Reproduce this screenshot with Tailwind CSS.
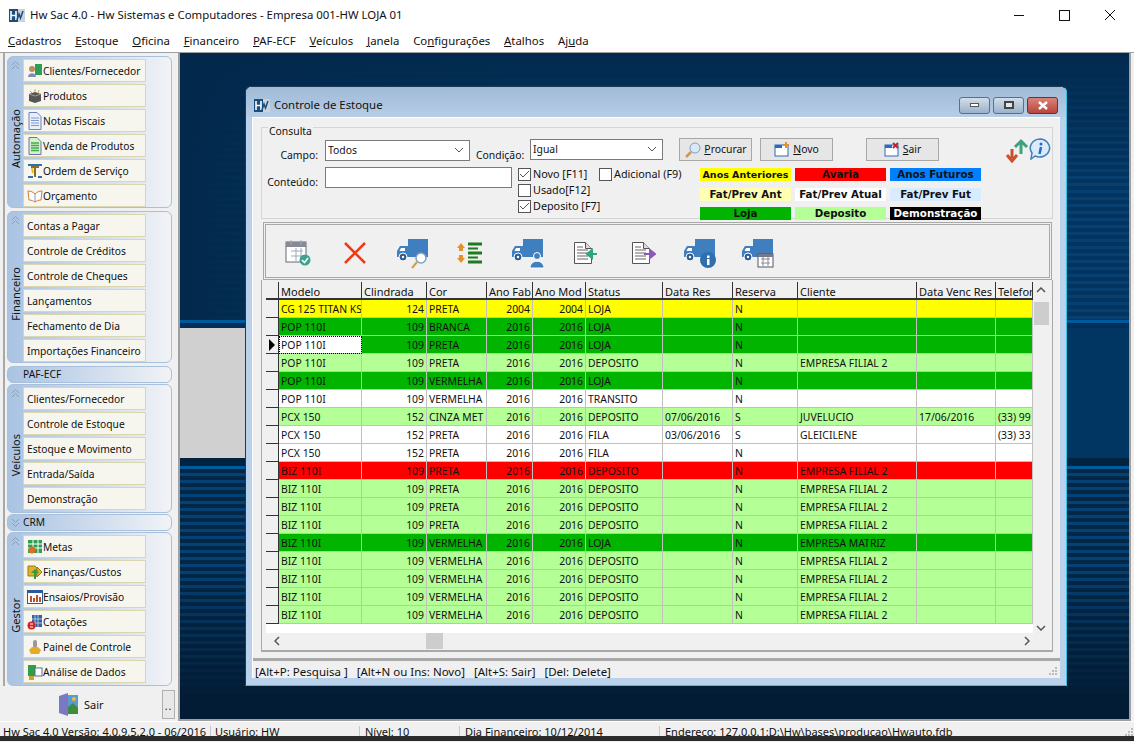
<!DOCTYPE html>
<html lang="en">
<head>
  <meta charset="UTF-8" />
  <title>Hw Sac 4.0</title>
  <script src="https://cdn.jsdelivr.net/npm/@tailwindcss/browser@4"></script>
</head>
<body class="w-[1134px] h-[742px] overflow-hidden bg-[#f0f0f0] text-[10.4px] leading-none text-[#111] font-['Noto_Sans',sans-serif]">

  <!-- shared icons -->
  <svg class="hidden">
    <symbol id="logo" viewBox="0 0 16 13">
      <rect width="16" height="13" fill="#1d4d7d"/><rect x="9" width="7" height="13" fill="#c9d3dc"/>
      <path d="M2 2v9M7 2v9M2 6.500h5" stroke="#fff" stroke-width="1.600" fill="none"/>
      <path d="M8 11l2-6 1.500 4L14 2" stroke="#1d4d7d" stroke-width="1.500" fill="none"/>
    </symbol>
    <symbol id="truck" viewBox="0 0 34 34">
      <rect x="12" y="3" width="20" height="18" fill="#3f7fbf"/>
      <path d="M1 21v-6l3-5h8v11z" fill="#3f7fbf"/><path d="M3.500 15l1.500-3h4v3z" fill="#fff"/>
      <circle cx="7" cy="21" r="4" fill="#2f5f8f" stroke="#fff"/><circle cx="7" cy="21" r="1.200" fill="#fff"/>
    </symbol>
    <symbol id="page" viewBox="0 0 24 24">
      <path d="M2.500 1.500h11l6 6v15h-17z" fill="#fff" stroke="#555"/><path d="M13.500 1.500v6h6" fill="#ddd" stroke="#555"/>
      <path d="M5 6h6M5 9h11M5 12h11M5 15h11M5 18h11" stroke="#666"/>
    </symbol>
    <symbol id="doc" viewBox="0 0 16 18">
      <path d="M2 .5h8l4 4v13H2z" fill="#e9eefb" stroke="#6f7fc0"/><path d="M4 6h8M4 8.500h8M4 11h8M4 13.500h8" stroke="#7f9bd0"/>
    </symbol>
  </svg>

  <!-- app title bar -->
  <div class="h-[30px] bg-white flex items-center pl-[9px] relative">
    <svg class="w-4 h-[13px] mr-[5px]"><use href="#logo"/></svg>
    <span class="text-[11.4px]">Hw Sac 4.0 - Hw Sistemas e Computadores - Empresa 001-HW LOJA 01</span>
    <div class="ml-auto flex items-center h-full">
      <svg class="w-[46px] h-[12px]" viewBox="0 0 46 12"><path d="M18 6.500h10" stroke="#111"/></svg>
      <svg class="w-[46px] h-[12px]" viewBox="0 0 46 12"><rect x="17.500" y="1.500" width="10" height="10" fill="none" stroke="#111"/></svg>
      <svg class="w-[46px] h-[12px]" viewBox="0 0 46 12"><path d="M17 1l10 10M27 1L17 11" stroke="#111" fill="none"/></svg>
    </div>
  </div>

  <!-- menu -->
  <nav class="h-[22px] bg-white flex items-center pl-[8px] gap-[13.800px] text-[11.4px]">
    <span><u>C</u>adastros</span><span><u>E</u>stoque</span><span><u>O</u>ficina</span><span><u>F</u>inanceiro</span><span><u>P</u>AF-ECF</span><span><u>V</u>eículos</span><span><u>J</u>anela</span><span>Co<u>n</u>figurações</span><span><u>A</u>talhos</span><span>Aj<u>u</u>da</span>
  </nav>

  <div class="flex h-[670px] border-t border-[#a0a0a0]">

    <!-- left panel -->
    <aside class="w-[178px] shrink-0 flex flex-col text-[10.25px]">
      <div class="h-[633px] shrink-0 ml-[3px] pl-[2px] pt-[3px] border-l-2 border-[#a8a8a8] flex flex-col gap-[3px]">

      <!-- Automação -->
      <section class="w-[165px] h-[152px] shrink-0 flex rounded-md border border-[#a9c0dc] bg-linear-to-r from-[#a9c3e2] to-[#f1f3f6]">
        <div class="w-[15px] flex flex-col items-center pt-[3px]">
          <svg class="w-[9px] h-[10px]" viewBox="0 0 9 10"><path d="M1 5l3.500-3.500L8 5M1 9l3.500-3.500L8 9" stroke="#8aa0b8" fill="none"/></svg>
          <div class="flex-1 flex items-center justify-center"><span class="[writing-mode:vertical-rl] rotate-180 text-[11px]">Automação</span></div>
        </div>
        <div class="flex flex-col gap-[2px] pt-[2px]">
          <div class="w-[123px] h-[23px] flex items-center pl-[3px] pt-[1px] bg-[#f6f6ee] border border-[#dad7b0]"><svg class="w-[16px] h-[16px] shrink-0" viewBox="0 0 16 16"><rect x="8" y="1" width="7" height="11" fill="#2f9e55"/><circle cx="5" cy="6" r="3" fill="#b98a60"/><path d="M1 14c0-5 8-5 8 0z" fill="#7f8fb0"/></svg>Clientes/Fornecedor</div>
          <div class="w-[123px] h-[23px] flex items-center pl-[3px] pt-[1px] bg-[#f6f6ee] border border-[#dad7b0]"><svg class="w-[16px] h-[16px] shrink-0" viewBox="0 0 16 16"><path d="M2 6l6-2 6 2v7l-6 2-6-2z" fill="#555"/><path d="M2 6l6 2 6-2" stroke="#999" fill="none"/><path d="M3 3l2 2M8 1v3M12 2l-1 3" stroke="#d9a030"/></svg>Produtos</div>
          <div class="w-[123px] h-[23px] flex items-center pl-[3px] pt-[1px] bg-[#f6f6ee] border border-[#dad7b0]"><svg class="w-[16px] h-[18px] shrink-0"><use href="#doc"/></svg>Notas Fiscais</div>
          <div class="w-[123px] h-[23px] flex items-center pl-[3px] pt-[1px] bg-[#f6f6ee] border border-[#dad7b0]"><svg class="w-[16px] h-[18px] shrink-0" viewBox="0 0 16 18"><path d="M2 .5h8l4 4v13H2z" fill="#d8f0c8" stroke="#6f70b0"/><path d="M4 6h8M4 8.500h8M4 11h8M4 13.500h8" stroke="#3caa50" stroke-width="1.500"/></svg>Venda de Produtos</div>
          <div class="w-[123px] h-[23px] flex items-center pl-[3px] pt-[1px] bg-[#f6f6ee] border border-[#dad7b0]"><svg class="w-[16px] h-[16px] shrink-0" viewBox="0 0 16 16"><path d="M1 2h14M1 14h5M11 14h4" stroke="#2f70b0" stroke-width="2"/><path d="M8 3v11M4 4h8" stroke="#8a6a30" stroke-width="2"/><path d="M5 5l1 5" stroke="#e8c020" stroke-width="2"/></svg>Ordem de Serviço</div>
          <div class="w-[123px] h-[23px] flex items-center pl-[3px] pt-[1px] bg-[#f6f6ee] border border-[#dad7b0]"><svg class="w-[16px] h-[16px] shrink-0" viewBox="0 0 16 16"><path d="M1 3c3 0 5 1 7 3 2-2 4-3 7-3l-1 9c-3 0-4 1-6 2-2-1-3-2-6-2z" fill="#fff" stroke="#d97a30"/><path d="M8 6v8" stroke="#7f9bd0"/></svg>Orçamento</div>
        </div>
      </section>

      <!-- Financeiro -->
      <section class="w-[165px] h-[152px] shrink-0 flex rounded-md border border-[#a9c0dc] bg-linear-to-r from-[#a9c3e2] to-[#f1f3f6]">
        <div class="w-[15px] flex flex-col items-center pt-[3px]">
          <svg class="w-[9px] h-[10px]" viewBox="0 0 9 10"><path d="M1 5l3.500-3.500L8 5M1 9l3.500-3.500L8 9" stroke="#8aa0b8" fill="none"/></svg>
          <div class="flex-1 flex items-center justify-center"><span class="[writing-mode:vertical-rl] rotate-180 text-[11px]">Financeiro</span></div>
        </div>
        <div class="flex flex-col gap-[2px] pt-[2px]">
          <div class="w-[123px] h-[23px] flex items-center pl-[3px] pt-[1px] bg-[#f6f6ee] border border-[#dad7b0]">Contas a Pagar</div>
          <div class="w-[123px] h-[23px] flex items-center pl-[3px] pt-[1px] bg-[#f6f6ee] border border-[#dad7b0]">Controle de Créditos</div>
          <div class="w-[123px] h-[23px] flex items-center pl-[3px] pt-[1px] bg-[#f6f6ee] border border-[#dad7b0]">Controle de Cheques</div>
          <div class="w-[123px] h-[23px] flex items-center pl-[3px] pt-[1px] bg-[#f6f6ee] border border-[#dad7b0]">Lançamentos</div>
          <div class="w-[123px] h-[23px] flex items-center pl-[3px] pt-[1px] bg-[#f6f6ee] border border-[#dad7b0]">Fechamento de Dia</div>
          <div class="w-[123px] h-[23px] flex items-center pl-[3px] pt-[1px] bg-[#f6f6ee] border border-[#dad7b0] whitespace-nowrap">Importações Financeiro</div>
        </div>
      </section>

      <!-- PAF-ECF -->
      <div class="w-[165px] h-[17px] shrink-0 flex items-center pl-[15px] rounded-md border border-[#a9c0dc] bg-linear-to-r from-[#a9c3e2] to-[#f1f3f6]">PAF-ECF</div>

      <!-- Veículos -->
      <section class="-mt-[2px] w-[165px] h-[129px] shrink-0 flex rounded-md border border-[#a9c0dc] bg-linear-to-r from-[#a9c3e2] to-[#f1f3f6]">
        <div class="w-[15px] flex flex-col items-center pt-[3px]">
          <svg class="w-[9px] h-[10px]" viewBox="0 0 9 10"><path d="M1 5l3.500-3.500L8 5M1 9l3.500-3.500L8 9" stroke="#8aa0b8" fill="none"/></svg>
          <div class="flex-1 flex items-center justify-center"><span class="[writing-mode:vertical-rl] rotate-180 text-[11px]">Veículos</span></div>
        </div>
        <div class="flex flex-col gap-[2px] pt-[2px]">
          <div class="w-[123px] h-[23px] flex items-center pl-[3px] pt-[1px] bg-[#f6f6ee] border border-[#dad7b0]">Clientes/Fornecedor</div>
          <div class="w-[123px] h-[23px] flex items-center pl-[3px] pt-[1px] bg-[#f6f6ee] border border-[#dad7b0]">Controle de Estoque</div>
          <div class="w-[123px] h-[23px] flex items-center pl-[3px] pt-[1px] bg-[#f6f6ee] border border-[#dad7b0]">Estoque e Movimento</div>
          <div class="w-[123px] h-[23px] flex items-center pl-[3px] pt-[1px] bg-[#f6f6ee] border border-[#dad7b0]">Entrada/Saída</div>
          <div class="w-[123px] h-[23px] flex items-center pl-[3px] pt-[1px] bg-[#f6f6ee] border border-[#dad7b0]">Demonstração</div>
        </div>
      </section>

      <!-- CRM -->
      <div class="-mt-[2px] w-[165px] h-[17px] shrink-0 flex items-center rounded-md border border-[#a9c0dc] bg-linear-to-r from-[#a9c3e2] to-[#f1f3f6]">
        <svg class="w-[15px] h-[10px]" viewBox="0 0 15 10"><path d="M4 1l3.500 3.500L11 1M4 5l3.500 3.500L11 5" stroke="#8aa0b8" fill="none"/></svg>CRM
      </div>

      <!-- Gestor -->
      <section class="-mt-[2px] w-[165px] h-[154px] shrink-0 flex rounded-md border border-[#a9c0dc] bg-linear-to-r from-[#a9c3e2] to-[#f1f3f6]">
        <div class="w-[15px] flex flex-col items-center pt-[3px]">
          <svg class="w-[9px] h-[10px]" viewBox="0 0 9 10"><path d="M1 5l3.500-3.500L8 5M1 9l3.500-3.500L8 9" stroke="#8aa0b8" fill="none"/></svg>
          <div class="flex-1 flex items-center justify-center"><span class="[writing-mode:vertical-rl] rotate-180 text-[11px]">Gestor</span></div>
        </div>
        <div class="flex flex-col gap-[2px] pt-[2px]">
          <div class="w-[123px] h-[23px] flex items-center pl-[3px] pt-[1px] bg-[#f6f6ee] border border-[#dad7b0]"><svg class="w-[16px] h-[16px] shrink-0" viewBox="0 0 16 16"><rect x="1" y="1" width="14" height="13" fill="#2f9e55"/><path d="M1 5h14M1 9h14M6 1v13M11 1v13" stroke="#fff"/><circle cx="5" cy="11" r="3.500" fill="#d9701f"/></svg>Metas</div>
          <div class="w-[123px] h-[23px] flex items-center pl-[3px] pt-[1px] bg-[#f6f6ee] border border-[#dad7b0]"><svg class="w-[16px] h-[16px] shrink-0" viewBox="0 0 16 16"><path d="M1 2h7l2 2v8H1z" fill="#e0b030" stroke="#a07a10"/><path d="M10 3l5 5-5 5z" fill="#e0b030" stroke="#a07a10"/><path d="M7 15V9H4l4-4 4 4H9v6z" fill="#2f9e35"/></svg>Finanças/Custos</div>
          <div class="w-[123px] h-[23px] flex items-center pl-[3px] pt-[1px] bg-[#f6f6ee] border border-[#dad7b0]"><svg class="w-[16px] h-[16px] shrink-0" viewBox="0 0 16 16"><rect x=".5" y="1.500" width="15" height="13" fill="#fff" stroke="#2a5a9a"/><rect x="1" y="2" width="14" height="2" fill="#2a5a9a"/><path d="M4 13V7M7 13V9M10 13V6M13 13V8" stroke-width="2" stroke="#c0502a"/></svg>Ensaios/Provisão</div>
          <div class="w-[123px] h-[23px] flex items-center pl-[3px] pt-[1px] bg-[#f6f6ee] border border-[#dad7b0]"><svg class="w-[16px] h-[16px] shrink-0" viewBox="0 0 16 16"><rect x="5" y="1" width="10" height="12" fill="#3a5fa0"/><path d="M8 1v12M11 1v12M5 5h10M5 9h10" stroke="#a9c3e2"/><circle cx="4.500" cy="11.500" r="4" fill="#d9201f"/><path d="M3 10h3M3 13h3" stroke="#fff"/></svg>Cotações</div>
          <div class="w-[123px] h-[23px] flex items-center pl-[3px] pt-[1px] bg-[#f6f6ee] border border-[#dad7b0]"><svg class="w-[16px] h-[16px] shrink-0" viewBox="0 0 16 16"><rect x="6" y="1" width="4" height="8" rx="2" fill="#999"/><path d="M2 11l3-3h6l3 3-2 4H4z" fill="#e8a92a"/></svg>Painel de Controle</div>
          <div class="w-[123px] h-[23px] flex items-center pl-[3px] pt-[1px] bg-[#f6f6ee] border border-[#dad7b0]"><svg class="w-[16px] h-[16px] shrink-0" viewBox="0 0 16 16"><rect x="1" y="1" width="8" height="11" fill="#2f9e45"/><rect x="8" y="4" width="7" height="8" fill="#fff" stroke="#5a6a90"/><path d="M2 13h5M2 15h5" stroke="#d9a020" stroke-width="2"/></svg>Análise de Dados</div>
        </div>
      </section>
      </div>

      <!-- Sair -->
      <div class="h-[32px] mt-[2px] flex items-center relative">
        <svg class="w-[21px] h-[23px] ml-[58px]" viewBox="0 0 21 23"><path d="M1 3l9-3v23l-9-3z" fill="#7a78c0"/><rect x="10" y="2" width="10" height="19" fill="#5a9ad0"/><path d="M10 21v-7l5-4 5 5v6z" fill="#3c8c40"/><circle cx="16" cy="6" r="2" fill="#f0c030"/></svg>
        <span class="ml-[5px] text-[11px]">Sair</span>
        <div class="absolute left-[162px] top-[2px] w-[13px] h-[29px] bg-[#e8e8e8] border border-[#b0b0b0] flex items-end justify-center pb-[7px] tracking-[1px]">..</div>
      </div>
    </aside>

    <!-- MDI area -->
    <main class="relative flex-1 mr-[3px] h-[668px] flex flex-col overflow-hidden border-x-2 border-b-2 border-[#a0a0a0]">
      <div class="h-[267px] shrink-0 bg-[linear-gradient(90deg,#02294c_0%,#02294c00_35%),linear-gradient(180deg,#022a4e_0px,#022a4e00_130px),repeating-linear-gradient(180deg,#03335f_0px,#03335f_4px,#063f70_4px,#063f70_7px)]"></div>
      <div class="h-[3px] shrink-0 bg-[#005a9e]"></div>
      <div class="h-[5px] shrink-0 bg-[#022f58]"></div>
      <div class="h-[130px] shrink-0 bg-[#013662]"><div class="w-[66px] h-full bg-[#d0d0d0]"></div></div>
      <div class="h-[8px] shrink-0 bg-[#02233f]"></div>
      <div class="h-[3px] shrink-0 bg-[#005a9e]"></div>
      <div class="flex-1 bg-[linear-gradient(180deg,#02203c00_0%,#02203c00_40%,#021c35_92%,#021c35_100%),repeating-linear-gradient(180deg,#022747_0px,#022747_4px,#054174_4px,#054174_7px)]"></div>

      <!-- Controle de Estoque window -->
      <div class="absolute left-[65px] top-[33px] w-[822px] h-[600px] rounded-t-md bg-[#b9d1ea] border border-[#1b3a55] border-r-[#35c3e6] border-b-[#35c3e6] flex flex-col">
        <div class="h-[30px] shrink-0 rounded-t-md bg-linear-to-b from-[#a0bad6] to-[#b6cde6] flex items-center pl-[8px] pt-[6px]">
          <svg class="w-4 h-[13px] mr-[4px]"><use href="#logo"/></svg>
          <span class="text-[11.4px]">Controle de Estoque</span>
          <div class="ml-auto mr-[8px] flex gap-[3px]">
            <div class="w-[31px] h-[17px] rounded-[3px] border border-[#5b6f85] bg-linear-to-b from-[#d2dde9] to-[#9cb2ca] flex items-center justify-center"><span class="w-[9px] h-[4px] bg-white border border-[#555]"></span></div>
            <div class="w-[31px] h-[17px] rounded-[3px] border border-[#5b6f85] bg-linear-to-b from-[#d2dde9] to-[#9cb2ca] flex items-center justify-center"><span class="w-[10px] h-[8px] bg-[#dfe6ee] border-2 border-[#444]"></span></div>
            <div class="w-[31px] h-[17px] rounded-[3px] border border-[#7a2a28] bg-linear-to-b from-[#d9837a] to-[#b8443c] flex items-center justify-center"><svg class="w-[12px] h-[9px]" viewBox="0 0 12 9"><path d="M2 1l8 7M10 1L2 8" stroke="#fff" stroke-width="2.500"/></svg></div>
          </div>
        </div>

        <div class="mx-[6px] h-[561px] bg-[#f0f0f0] flex flex-col px-[9px] pt-[9px] border-t border-l border-white relative">

          <!-- Consulta -->
          <div class="relative w-[792px] h-[92px] shrink-0 border border-[#d5d5d5] pt-[10px] flex -ml-[1px]">
            <span class="absolute -top-[2px] left-[6px] bg-[#f0f0f0] px-[1px]">Consulta</span>

            <div class="w-[417px] shrink-0">
              <div class="h-[29px] flex items-start">
                <span class="w-[56px] shrink-0 mt-[12px] text-right">Campo:</span>
                <div class="ml-[7px] mt-[2px] w-[145px] shrink-0 h-[21px] pb-[1px] bg-white border border-[#7a7a7a] flex items-center pl-[2px]">Todos<svg class="ml-auto mr-[5px] w-[10px] h-[6px]" viewBox="0 0 10 6"><path d="M1 1l4 4 4-4" stroke="#555" fill="none"/></svg></div>
                <span class="ml-[6px] mt-[12px] w-[47px] shrink-0">Condição:</span>
                <div class="ml-[7px] mt-[1px] w-[133px] shrink-0 h-[21px] pb-[1px] bg-white border border-[#7a7a7a] flex items-center pl-[2px]">Igual<svg class="ml-auto mr-[5px] w-[10px] h-[6px]" viewBox="0 0 10 6"><path d="M1 1l4 4 4-4" stroke="#555" fill="none"/></svg></div>
              </div>
              <div class="flex items-start text-[10.8px] whitespace-nowrap">
                <span class="w-[56px] shrink-0 mt-[10px] text-right text-[10.4px]">Conteúdo:</span>
                <div class="ml-[7px] w-[187px] shrink-0 h-[21px] bg-white border border-[#7a7a7a]"></div>
                <div class="ml-[6px] w-[81px] shrink-0 flex flex-col gap-[3px] pt-[1px]">
                  <label class="flex items-center gap-[2px] h-[13px]"><span class="w-[13px] h-[13px] shrink-0 bg-white border border-[#555] flex items-center justify-center"><svg class="w-[11px] h-[9px]" viewBox="0 0 11 9"><path d="M1 4l3 3 6-6" stroke="#555" fill="none"/></svg></span>Novo [F11]</label>
                  <label class="flex items-center gap-[2px] h-[13px]"><span class="w-[13px] h-[13px] shrink-0 bg-white border border-[#555]"></span>Usado[F12]</label>
                  <label class="flex items-center gap-[2px] h-[13px]"><span class="w-[13px] h-[13px] shrink-0 bg-white border border-[#555] flex items-center justify-center"><svg class="w-[11px] h-[9px]" viewBox="0 0 11 9"><path d="M1 4l3 3 6-6" stroke="#555" fill="none"/></svg></span>Deposito [F7]</label>
                </div>
                <label class="flex items-center gap-[2px] h-[13px] mt-[1px]"><span class="w-[13px] h-[13px] shrink-0 bg-white border border-[#555]"></span>Adicional (F9)</label>
              </div>
            </div>

            <div class="flex-1">
              <div class="h-[23px] flex">
                <div class="w-[73px] h-[23px] bg-[#e6e6e6] border border-[#a8a8a8] flex items-center justify-center gap-[2px]"><svg class="w-[18px] h-[18px]" viewBox="0 0 18 18"><circle cx="11" cy="7" r="5" fill="#dbe9f7" stroke="#7f9fc0"/><path d="M7 11l-5 5" stroke="#d09a40" stroke-width="2.500"/></svg><span><u>P</u>rocurar</span></div>
                <div class="ml-[8px] w-[73px] h-[23px] bg-[#e6e6e6] border border-[#a8a8a8] flex items-center justify-center gap-[3px]"><svg class="w-[16px] h-[15px]" viewBox="0 0 16 15"><rect x="1" y="3" width="13" height="11" fill="#fff" stroke="#2a6ac0"/><rect x="1" y="3" width="7" height="3" fill="#2a6ac0"/><path d="M12 0v6M9 3h6" stroke="#e8902a" stroke-width="2"/></svg><span><u>N</u>ovo</span></div>
                <div class="ml-[33px] w-[73px] h-[23px] bg-[#e6e6e6] border border-[#a8a8a8] flex items-center justify-center gap-[3px]"><svg class="w-[16px] h-[15px]" viewBox="0 0 16 15"><rect x="1" y="3" width="13" height="11" fill="#fff" stroke="#2a6ac0"/><rect x="1" y="3" width="7" height="3" fill="#2a6ac0"/><path d="M9 1l5 5M14 1L9 6" stroke="#c8202a" stroke-width="2"/></svg><span><u>S</u>air</span></div>
                <div class="ml-auto mr-[1px] flex items-start">
                  <svg class="w-[24px] h-[25px]" viewBox="0 0 24 25"><path d="M7 11v9M2 17l5 6 5-6" stroke="#c8502a" stroke-width="3" fill="none"/><path d="M16 4v12M10 9l6-6 6 6" stroke="#3fa37a" stroke-width="3" fill="none"/></svg>
                  <svg class="w-[22px] h-[22px]" viewBox="0 0 22 22"><path d="M11 1a10 9 0 1 1-5 17l-4 3 1-6A10 9 0 0 1 11 1z" fill="#dcebfa" stroke="#3f7fc0" stroke-width="1.500"/><circle cx="12" cy="6" r="1.500" fill="#2a6ac0"/><path d="M12 9l-1.500 7" stroke="#2a6ac0" stroke-width="2.500"/></svg>
                </div>
              </div>
              <div class="mt-[7px] ml-[21px] w-[281px] grid grid-cols-3 gap-x-[4px] gap-y-[6.500px] text-center font-bold text-[10.3px] leading-[13px] font-['DejaVu_Sans',sans-serif]">
                <div class="h-[13px] text-[9.500px] whitespace-nowrap bg-[#ffff00]">Anos Anteriores</div>
                <div class="h-[13px] bg-[#ff0000]">Avaria</div>
                <div class="h-[13px] bg-[#0080ff]">Anos Futuros</div>
                <div class="h-[13px] bg-[#ffffb4]">Fat/Prev Ant</div>
                <div class="h-[13px] bg-white">Fat/Prev Atual</div>
                <div class="h-[13px] bg-[#d9ecff]">Fat/Prev Fut</div>
                <div class="h-[13px] bg-[#00b400]">Loja</div>
                <div class="h-[13px] bg-[#b4ff96]">Deposito</div>
                <div class="h-[13px] bg-black text-white">Demonstração</div>
              </div>
            </div>
          </div>

          <!-- toolbar -->
          <div class="w-[789px] ml-[1px] h-[58px] shrink-0 mt-[3px] border-[3px] border-double border-[#a8a8a8] flex items-center pl-[3px] pt-[3px]">
            <div class="w-[57.500px] flex justify-center"><svg class="w-[28px] h-[28px]" viewBox="0 0 28 28"><rect x="2" y="3" width="20" height="20" fill="#fff" stroke="#667"/><rect x="2" y="3" width="20" height="5" fill="#8a8a95"/><path d="M7 1v5M17 1v5M7 12h12M7 17h12M12 9v13M17 9v13" stroke="#9ab"/><circle cx="21" cy="21" r="5.500" fill="#3aa58a"/><path d="M18 21l2.500 2.500L24 19" stroke="#fff" fill="none" stroke-width="1.500"/></svg></div>
            <div class="w-[57.500px] flex justify-center"><svg class="w-[24px] h-[24px]" viewBox="0 0 24 24"><path d="M2 2l20 20M22 2L2 22" stroke="#f03a17" stroke-width="2.500"/></svg></div>
            <div class="w-[57.500px] flex justify-center"><svg class="w-[34px] h-[34px]" viewBox="0 0 34 34"><use href="#truck" width="34" height="34"/><circle cx="25" cy="22" r="5" fill="#fff" stroke="#7f9fc0" stroke-width="1.500"/><path d="M21 26l-5 6" stroke="#d0a050" stroke-width="2"/></svg></div>
            <div class="w-[57.500px] flex justify-center"><svg class="w-[26px] h-[24px]" viewBox="0 0 26 24"><path d="M4 2l4 5H6v3H2V7H0zM4 22l4-5H6v-3H2v3H0z" fill="#e8902a"/><path d="M11 3h14M11 12h14M11 21h14" stroke="#1e7a1e" stroke-width="3" fill="none"/><path d="M11 7.500h10M11 16.500h10" stroke="#1e7a1e" stroke-width="2"/></svg></div>
            <div class="w-[57.500px] flex justify-center"><svg class="w-[34px] h-[34px]" viewBox="0 0 34 34"><use href="#truck" width="34" height="34"/><circle cx="26" cy="20" r="3.500" fill="#3f7fbf" stroke="#fff"/><path d="M19 32c0-9 14-9 14 0z" fill="#3f7fbf" stroke="#fff"/></svg></div>
            <div class="w-[57.500px] flex justify-center"><svg class="w-[26px] h-[24px]" viewBox="0 0 26 24"><use href="#page" width="24" height="24"/><path d="M25 13H16M20 9l-5 4 5 4z" stroke="#2fa57a" fill="#2fa57a" stroke-width="2"/></svg></div>
            <div class="w-[57.500px] flex justify-center"><svg class="w-[26px] h-[24px]" viewBox="0 0 26 24"><use href="#page" width="24" height="24"/><path d="M14 13h7M20 9l5 4-5 4z" stroke="#8a5ab8" fill="#8a5ab8" stroke-width="2"/></svg></div>
            <div class="w-[57.500px] flex justify-center"><svg class="w-[34px] h-[34px]" viewBox="0 0 34 34"><use href="#truck" width="34" height="34"/><circle cx="25" cy="24" r="8" fill="#2f6fae"/><rect x="24" y="23" width="2.500" height="6" fill="#fff"/><rect x="24" y="19.500" width="2.500" height="2.500" fill="#fff"/></svg></div>
            <div class="w-[57.500px] flex justify-center"><svg class="w-[34px] h-[34px]" viewBox="0 0 34 34"><use href="#truck" width="34" height="34"/><rect x="17" y="18" width="15" height="13" fill="#fff" stroke="#556"/><rect x="17" y="18" width="15" height="3" fill="#778"/><path d="M20 23h9M20 27h9M22 21v9M27 21v9" stroke="#889"/></svg></div>
          </div>

          <!-- grid -->
          <div class="w-[792px] h-[372px] shrink-0 -ml-[1px] bg-[#f0f0f0] border-x border-b-2 border-[#a8a8a8] relative pt-[2px] pl-[4px] flex flex-col">
            <div id="grid" class="w-[767px] h-[351px] bg-white shrink-0 overflow-hidden"></div>
            <!-- vertical scrollbar -->
            <div class="absolute left-[771px] top-[2px] bottom-[19px] w-[16px] flex flex-col items-center">
              <svg class="w-[10px] h-[6px] mt-[5px]" viewBox="0 0 10 6"><path d="M1 5l4-4 4 4" stroke="#555" stroke-width="1.500" fill="none"/></svg>
              <div class="w-[15px] h-[23px] mt-[9px] bg-[#cdcdcd]"></div>
              <svg class="w-[10px] h-[6px] mt-auto" viewBox="0 0 10 6"><path d="M1 1l4 4 4-4" stroke="#555" stroke-width="1.500" fill="none"/></svg>
            </div>
            <!-- horizontal scrollbar -->
            <div class="h-[16px] flex items-center">
              <svg class="w-[6px] h-[10px] ml-[8px]" viewBox="0 0 6 10"><path d="M5 1L1 5l4 4" stroke="#555" stroke-width="1.500" fill="none"/></svg>
              <div class="w-[17px] h-[16px] ml-[146px] bg-[#cdcdcd]"></div>
              <svg class="w-[6px] h-[10px] ml-auto mr-[22px]" viewBox="0 0 6 10"><path d="M1 1l4 4-4 4" stroke="#555" stroke-width="1.500" fill="none"/></svg>
            </div>
          </div>
          <div class="h-[3px] shrink-0 mt-[6px] -mx-[9px] bg-[#a8a8a8]"></div>

          <!-- shortcuts -->
          <div class="flex-1 flex items-center gap-[9px] -ml-[7px] pt-[5px] text-[11.500px] whitespace-nowrap">
            <span>[Alt+P: Pesquisa ]</span><span>[Alt+N ou Ins: Novo]</span><span>[Alt+S: Sair]</span><span>[Del: Delete]</span>
          </div>
          <svg class="absolute right-[3px] bottom-[3px] w-[8px] h-[8px]" viewBox="0 0 8 8"><path d="M6 0h2v2H6zM3 3h2v2H3zM6 3h2v2H6zM0 6h2v2H0zM3 6h2v2H3zM6 6h2v2H6z" fill="#bbb"/></svg>
        </div>
      </div>
    </main>
  </div>

  <!-- status bar -->
  <footer class="h-[15px] -mt-[1px] flex border-t border-white overflow-hidden pt-[4px] whitespace-nowrap text-[11px] relative">
    <span class="w-[211px] pl-[3px] border-r border-[#c8c8c8]">Hw Sac 4.0 Versão: 4.0.9.5.2.0 - 06/2016</span>
    <span class="w-[149px] pl-[4px] border-r border-[#c8c8c8]">Usuário: HW</span>
    <span class="w-[100px] pl-[5px] border-r border-[#c8c8c8]">Nível: 10</span>
    <span class="w-[200px] pl-[5px] border-r border-[#c8c8c8]">Dia Financeiro: 10/12/2014</span>
    <span class="pl-[5px]">Endereço: 127.0.0.1:D:\Hw\bases\producao\Hwauto.fdb</span>
    <svg class="absolute right-[1px] bottom-0 w-[8px] h-[8px]" viewBox="0 0 8 8"><path d="M6 0h2v2H6zM3 3h2v2H3zM6 3h2v2H6zM0 6h2v2H0zM3 6h2v2H3zM6 6h2v2H6z" fill="#bbb"/></svg>
  </footer>
  <div class="h-[5px] bg-[#2b2b2b]"></div>

  <script>
    const colors = {
      y: 'bg-[#ffff00]',
      g: 'bg-[#00b400]',
      l: 'bg-[#b4ff96]',
      w: 'bg-white',
      r: 'bg-[#ff0000]'
    };
    const cols = ['Modelo','Clindrada','Cor','Ano Fab','Ano Mod','Status','Data Res','Reserva','Cliente','Data Venc Res','Telefone'];
    const right = [1, 3, 4]; // numeric columns
    const filial = 'EMPRESA FILIAL 2';
    const rows = [
      ['y','CG 125 TITAN KS','124','PRETA','2004','2004','LOJA','','N','','',''],
      ['g','POP 110I','109','BRANCA','2016','2016','LOJA','','N','','',''],
      ['g','POP 110I','109','PRETA','2016','2016','LOJA','','N','','',''],
      ['l','POP 110I','109','PRETA','2016','2016','DEPOSITO','','N',filial,'',''],
      ['g','POP 110I','109','VERMELHA','2016','2016','LOJA','','N','','',''],
      ['w','POP 110I','109','VERMELHA','2016','2016','TRANSITO','','N','','',''],
      ['l','PCX 150','152','CINZA MET','2016','2016','DEPOSITO','07/06/2016','S','JUVELUCIO','17/06/2016','(33) 99'],
      ['w','PCX 150','152','PRETA','2016','2016','FILA','03/06/2016','S','GLEICILENE','','(33) 33'],
      ['w','PCX 150','152','PRETA','2016','2016','FILA','','N','','',''],
      ['r','BIZ 110I','109','PRETA','2016','2016','DEPOSITO','','N',filial,'',''],
      ['l','BIZ 110I','109','PRETA','2016','2016','DEPOSITO','','N',filial,'',''],
      ['l','BIZ 110I','109','PRETA','2016','2016','DEPOSITO','','N',filial,'',''],
      ['l','BIZ 110I','109','PRETA','2016','2016','DEPOSITO','','N',filial,'',''],
      ['g','BIZ 110I','109','VERMELHA','2016','2016','LOJA','','N','EMPRESA MATRIZ','',''],
      ['l','BIZ 110I','109','VERMELHA','2016','2016','DEPOSITO','','N',filial,'',''],
      ['l','BIZ 110I','109','VERMELHA','2016','2016','DEPOSITO','','N',filial,'',''],
      ['l','BIZ 110I','109','VERMELHA','2016','2016','DEPOSITO','','N',filial,'',''],
      ['l','BIZ 110I','109','VERMELHA','2016','2016','DEPOSITO','','N',filial,'','']
    ];
    const gridCols = 'grid grid-cols-[13px_83px_65px_60px_46px_53px_77px_70px_65px_119px_79px_37px]';

    let html = `<div class="${gridCols} h-[18px] bg-[#f0f0f0] text-[11px]"><div class="border-r border-b-2 border-[#333]"></div>`;
    cols.forEach(c => {
      html += `<div class="border-r border-b-2 border-[#333] pl-[2px] pt-[4px] overflow-hidden whitespace-nowrap">${c}</div>`;
    });
    html += '</div>';

    rows.forEach((r, i) => {
      const mark = i === 2 ? '<span class="w-0 h-0 border-y-[6px] border-y-transparent border-l-[6px] border-l-black"></span>' : '';
      html += `<div class="${gridCols} h-[18px] ${colors[r[0]]}"><div class="bg-[#f0f0f0] border-r border-b border-[#333] flex items-center justify-center">${mark}</div>`;
      r.slice(1).forEach((v, j) => {
        const align = right.includes(j) ? 'text-right pr-[2px]' : 'pl-[2px]';
        const focus = i === 2 && j === 0 ? 'bg-white outline-1 outline-dotted outline-black -outline-offset-1' : '';
        html += `<div class="border-r border-b border-[#c0c0c0] pt-[4px] overflow-hidden whitespace-nowrap ${align} ${focus}">${v}</div>`;
      });
      html += '</div>';
    });
    document.getElementById('grid').innerHTML = html;
  </script>
</body>
</html>
